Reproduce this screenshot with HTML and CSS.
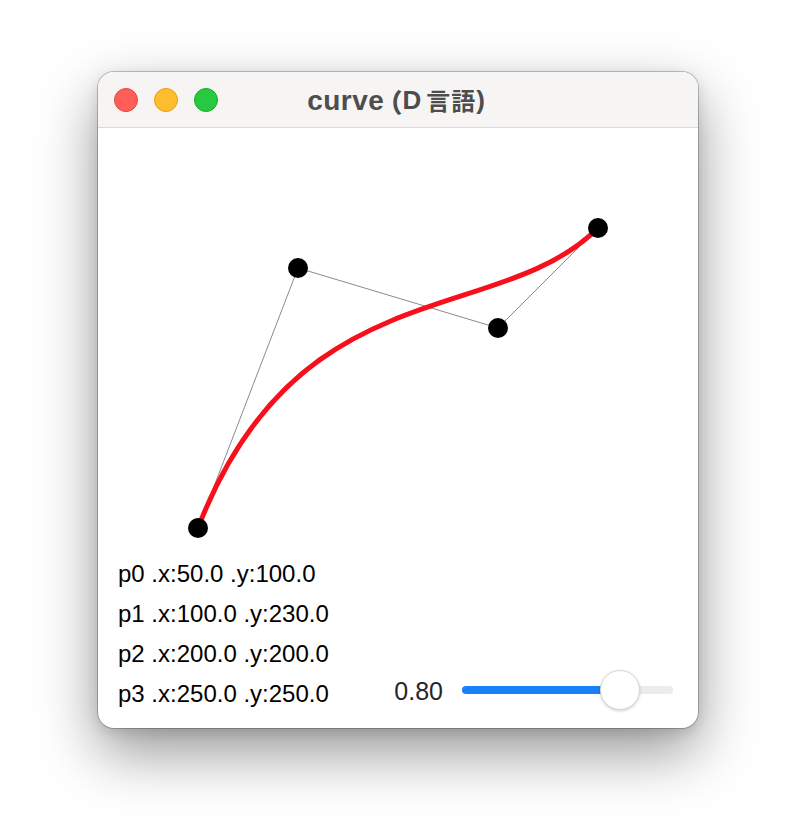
FILE: index.html
```html
<!DOCTYPE html>
<html lang="ja">
<head>
<meta charset="utf-8">
<title>curve</title>
<link rel="stylesheet" href="styles.css">
</head>
<body>
<div class="window">
  <div class="titlebar">
    <div class="lights">
      <span class="light red"></span>
      <span class="light yellow"></span>
      <span class="light green"></span>
    </div>
    <div class="title"><span class="t-latin">curve</span><span class="t-paren">（</span><span class="t-d">D</span><span class="t-cjk">言語</span><span class="t-close">)</span></div>
  </div>
  <div class="content">
    <svg class="canvas" width="600" height="600" viewBox="0 0 600 600">
      <polyline points="100,400 200,140 400,200 500,100" fill="none" stroke="#8a8a8a" stroke-width="1"/>
      <path d="M100,400 C200,140 400,200 500,100" fill="none" stroke="#f70f1c" stroke-width="5" stroke-linecap="round"/>
      <circle cx="100" cy="400" r="10" fill="#000"/>
      <circle cx="200" cy="140" r="10" fill="#000"/>
      <circle cx="400" cy="200" r="10" fill="#000"/>
      <circle cx="500" cy="100" r="10" fill="#000"/>
    </svg>
    <div class="bottom">
      <div class="points">
        <div class="pt">p0 .x:50.0 .y:100.0</div>
        <div class="pt">p1 .x:100.0 .y:230.0</div>
        <div class="pt">p2 .x:200.0 .y:200.0</div>
        <div class="pt">p3 .x:250.0 .y:250.0</div>
      </div>
      <div class="slider-row">
        <div class="value">0.80</div>
        <div class="slider">
          <div class="track"><div class="fill" style="width:157px"></div></div>
          <div class="knob" style="left:138px"></div>
        </div>
      </div>
    </div>
  </div>
</div>
</body>
</html>
```
FILE: styles.css
```css
html, body {
  margin: 0;
  padding: 0;
  background: #ffffff;
}
body {
  width: 794px;
  height: 830px;
  overflow: hidden;
  font-family: "Liberation Sans", Arial, "Noto Sans CJK JP", sans-serif;
}
.window {
  margin: 72px 0 0 98px;
  width: 600px;
  height: 656px;
  border-radius: 16px;
  background: #ffffff;
  box-shadow: 0 0 0 1px rgba(0,0,0,0.22), 0 24px 60px rgba(0,0,0,0.42), 0 4px 14px rgba(0,0,0,0.12);
  overflow: hidden;
  display: flex;
  flex-direction: column;
}
.titlebar {
  height: 55px;
  border-bottom: 1px solid #dcdbda;
  background: #f6f5f4;
  display: flex;
  align-items: center;
  position: relative;
}
.lights {
  display: flex;
  gap: 16px;
  padding-left: 16px;
}
.light {
  width: 24px;
  height: 24px;
  border-radius: 50%;
  box-sizing: border-box;
}
.red { background: #ff5f57; border: 1px solid #e2463f; }
.yellow { background: #febc2e; border: 1px solid #e1a116; }
.green { background: #28c840; border: 1px solid #14ae2a; }
.title {
  position: absolute;
  left: 0;
  right: 0;
  top: 0;
  bottom: 0;
  display: flex;
  align-items: center;
  justify-content: center;
  padding-right: 4px;
  padding-top: 2px;
  font-family: "Liberation Sans", "Noto Sans CJK JP", sans-serif;
  font-weight: bold;
  font-size: 26px;
  color: #4d4d4d;
  white-space: nowrap;
  pointer-events: none;
}
.t-latin {
  font-size: 28px;
  letter-spacing: 0.5px;
}
.t-paren {
  font-family: "Noto Sans CJK JP", sans-serif;
  font-feature-settings: "halt" 1;
  font-weight: 900;
  margin-left: 5px;
}
.t-d {
  margin-right: 5px;
}
.t-cjk {
  font-family: "Noto Sans CJK JP", sans-serif;
  font-weight: 700;
  font-size: 24px;
  letter-spacing: 1px;
  position: relative;
  top: -1px;
}
.t-close {
  margin-left: 0;
}
.content {
  flex: 1;
  position: relative;
  display: flex;
  flex-direction: column;
  justify-content: flex-end;
}
.canvas {
  position: absolute;
  left: 0;
  top: 0;
}
.bottom {
  position: relative;
  display: flex;
  align-items: flex-end;
  padding: 0 25px 14px 20px;
}
.points {
  display: flex;
  flex-direction: column;
}
.pt {
  font-size: 24px;
  line-height: 40px;
  color: #000;
  white-space: nowrap;
}
.slider-row {
  margin-left: auto;
  height: 40px;
  display: flex;
  align-items: center;
  gap: 19px;
}
.value {
  font-size: 25px;
  color: #262626;
  margin-top: -6px;
}
.slider {
  position: relative;
  width: 211px;
  height: 40px;
  margin-top: -8px;
  display: flex;
  align-items: center;
}
.track {
  width: 100%;
  height: 8px;
  border-radius: 4px;
  background: #ececec;
  overflow: hidden;
}
.fill {
  height: 100%;
  background: #1a80f8;
}
.knob {
  position: absolute;
  top: 0;
  width: 40px;
  height: 40px;
  box-sizing: border-box;
  border-radius: 50%;
  background: #ffffff;
  border: 1px solid #d6d6d6;
  box-shadow: 0 1px 3px rgba(0,0,0,0.18);
}
```
